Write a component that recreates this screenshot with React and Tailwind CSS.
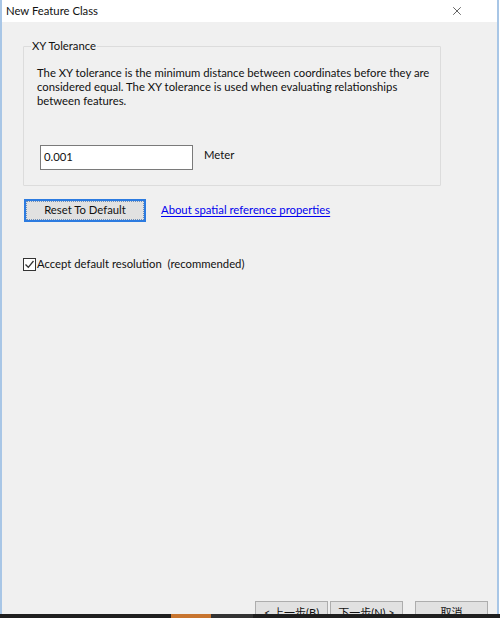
import { X } from 'lucide-react';

const App = () => {
  return (
    <div className="relative w-[500px] h-[618px] overflow-hidden bg-white font-['Lato','Noto_Sans_CJK_SC',sans-serif] text-[11.3px] text-[#111]">
      {/* window frame */}
      <div className="absolute left-0 top-0 w-[499px] h-[618px] border-x-2 border-[#a8c6e6] flex flex-col">
        {/* title bar */}
        <div className="h-[22px] bg-white flex items-center justify-between pl-[4px] pr-[33px] shrink-0">
          <span className="text-[11.3px] leading-none">New Feature Class</span>
          <X size={14} strokeWidth={1.3} className="text-[#333]" />
        </div>

        {/* body */}
        <div className="flex-1 bg-[#f0f0f0] flex flex-col pl-[21px]">
          {/* group box */}
          <div className="relative mt-[24px] w-[418px] h-[140px] border border-[#dcdcdc] rounded-[1px]">
            <span className="absolute left-[7px] -top-[9px] bg-[#f0f0f0] px-[1px] leading-[16px]">XY Tolerance</span>
            <p className="ml-[13px] mt-[19px] w-[400px] leading-[14px]">
              The XY tolerance is the minimum distance between coordinates before they are considered equal. The XY tolerance is used when evaluating relationships between features.
            </p>
            <div className="flex items-center mt-[37px] ml-[16px]">
              <div className="w-[153px] h-[25px] bg-white border border-[#7a7a7a] flex items-center pl-[3px]">0.001</div>
              <span className="ml-[11px] -mt-[4px]">Meter</span>
            </div>
          </div>

          {/* buttons row */}
          <div className="flex items-center mt-[13px] ml-[1px]">
            <button className="w-[122px] h-[23px] bg-[#e1e1e1] border-2 border-[#2c7be0] flex">
              <span className="flex-1 flex items-center justify-center border border-dotted border-[#6f8fb8]">Reset To Default</span>
            </button>
            <a className="ml-[15px] text-[#0000ee] underline underline-offset-[2px]">About spatial reference properties</a>
          </div>

          {/* checkbox */}
          <label className="flex items-center mt-[34px]">
            <span className="w-[13px] h-[13px] border border-[#333] bg-white flex items-center justify-center">
              <svg width="11" height="11" viewBox="0 0 11 11">
                <path d="M1.5 5.5 L4.3 8.3 L9.5 2" fill="none" stroke="#333" strokeWidth="1.3" />
              </svg>
            </span>
            <span className="ml-[1px]">Accept default resolution&nbsp; (recommended)</span>
          </label>

          <div className="flex-1" />

          {/* wizard buttons */}
          <div className="flex items-start h-[17px] pl-[232px] text-[11px]">
            <div className="w-[73px] h-[22px] bg-[#e1e1e1] border border-[#adadad] flex justify-center pt-[3px]">&lt; 上一步(B)</div>
            <div className="ml-[2px] w-[73px] h-[22px] bg-[#e1e1e1] border border-[#adadad] flex justify-center pt-[3px]">下一步(N) &gt;</div>
            <div className="ml-[12px] w-[73px] h-[22px] bg-[#e1e1e1] border border-[#adadad] flex justify-center pt-[3px]">取消</div>
          </div>
        </div>
      </div>

      {/* taskbar strip */}
      <div className="absolute left-0 bottom-0 w-full h-[4px] bg-[#1f1f1f] flex">
        <div className="ml-[171px] w-[40px] h-full bg-[#c8752f]" />
        <div className="w-[42px] h-full bg-[#333]" />
      </div>
    </div>
  );
};

export default App;
